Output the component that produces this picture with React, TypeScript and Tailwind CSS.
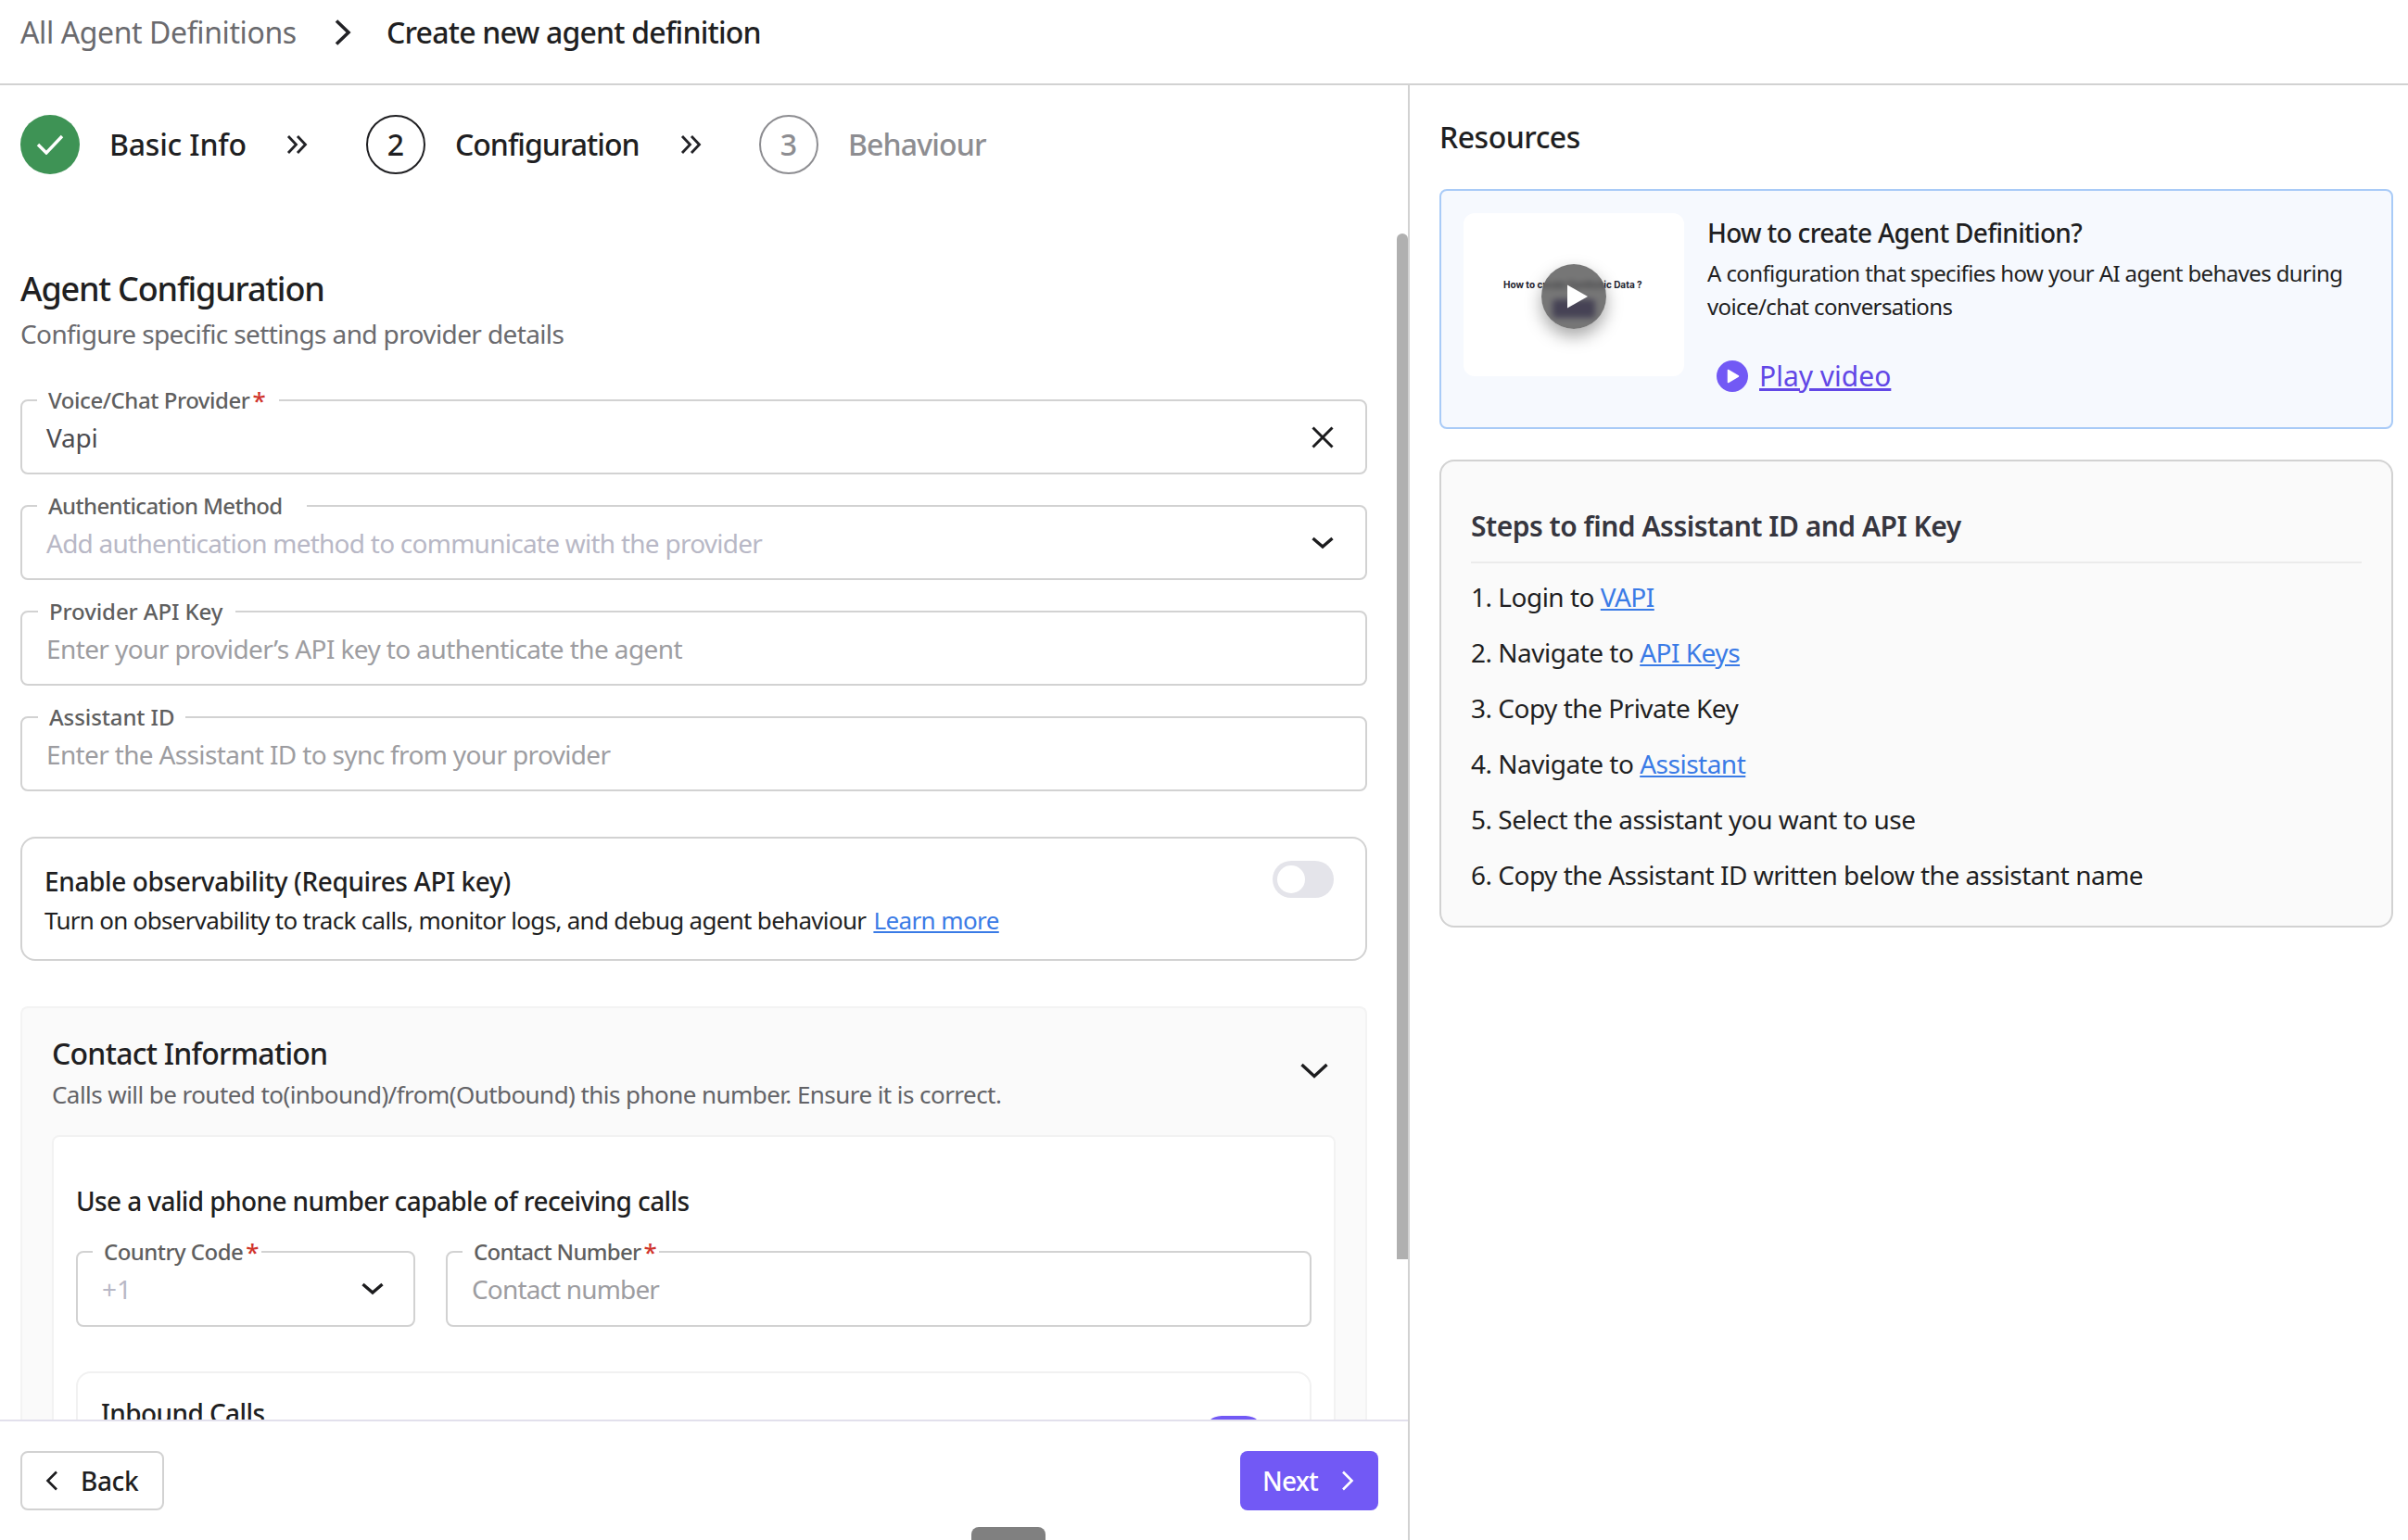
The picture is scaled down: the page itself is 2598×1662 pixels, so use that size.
import type { ReactNode } from 'react'

function DoubleChevron() {
  return (
    <svg width="23" height="20" viewBox="0 0 23 20" fill="none" stroke="#222226" strokeWidth="2.8" className="shrink-0">
      <path d="M2 1l8.5 9L2 19" />
      <path d="M12 1l8.5 9-8.5 9" />
    </svg>
  )
}

function ChevronDown({ className = '' }: { className?: string }) {
  return (
    <svg width="24" height="14" viewBox="0 0 24 14" fill="none" stroke="#1c1c1e" strokeWidth="3.4" className={className}>
      <path d="M1.5 2l10.5 9 10.5-9" />
    </svg>
  )
}

function Field({ label, required, gapClass, children, right, className = '' }: {
  label: string
  required?: boolean
  gapClass: string
  children: ReactNode
  right?: ReactNode
  className?: string
}) {
  return (
    <div className={`relative flex items-center justify-between rounded-lg border-2 border-[#d2d2d2] pl-[26px] pr-[34px] h-[81px] ${className}`}>
      <div className={`absolute left-[16px] -top-[17px] h-8 bg-white pl-3 flex items-center text-[24px] font-medium text-[#5f5f5f] leading-8 ${gapClass}`}>
        {label}
        {required && <span className="text-[#d0342c] ml-[3px] text-[26px]">*</span>}
      </div>
      <div className="text-[28px] leading-9">{children}</div>
      {right}
    </div>
  )
}

export default function App() {
  return (
    <div className="w-[2598px] h-[1662px] overflow-hidden bg-white flex flex-col text-[#1f1f22] font-['Noto_Sans',sans-serif]">
      {/* breadcrumb */}
      <div className="h-[92px] shrink-0 border-b-2 border-[#d2d2d2] pl-[22px] pb-[20px] flex items-center text-[32px] leading-10">
        <span className="w-[339px] text-[#6a6a6e] tracking-[-0.4px]">All Agent Definitions</span>
        <svg width="18" height="28" viewBox="0 0 18 28" fill="none" stroke="#222226" strokeWidth="3.6" className="shrink-0">
          <path d="M2 1.5l13 12.5-13 12.5" />
        </svg>
        <span className="ml-[38px] font-medium tracking-[-0.8px]">Create new agent definition</span>
      </div>

      <div className="flex-1 flex min-h-0">
        {/* left column */}
        <div className="relative w-[1521px] shrink-0 border-r-2 border-[#d2d2d2] flex flex-col">
          <div className="relative flex-1 min-h-0 overflow-hidden pl-[22px] pr-[44px]">
            <div className="absolute right-0 top-[160px] w-3 h-[1107px] bg-[#b0b0b0] rounded-t-md" />

            <div className="flex items-center h-16 mt-8 text-[32px] font-medium">
              <div className="w-16 h-16 rounded-full bg-[#3e9355] flex items-center justify-center shrink-0">
                <svg width="30" height="22" viewBox="0 0 30 22" fill="none" stroke="#fff" strokeWidth="3.4"><path d="M2 11l9 9L28 2" /></svg>
              </div>
              <span className="ml-8 w-[191px] tracking-[-0.2px]">Basic Info</span>
              <DoubleChevron />
              <div className="ml-[63px] w-16 h-16 rounded-full border-2 border-[#1f1f22] flex items-center justify-center shrink-0">2</div>
              <span className="ml-[32px] w-[243px] tracking-[-1px]">Configuration</span>
              <DoubleChevron />
              <div className="ml-[62px] w-16 h-16 rounded-full border-2 border-[#8d8d91] text-[#8d8d91] flex items-center justify-center shrink-0">3</div>
              <span className="ml-8 text-[#8d8d91] tracking-[-0.85px]">Behaviour</span>
            </div>

            <h2 className="mt-[102px] text-[36px] leading-[44px] font-medium tracking-[-1.2px]">Agent Configuration</h2>
            <p className="mt-[8px] text-[28px] leading-9 text-[#6a6a6e] tracking-[-0.62px]">Configure specific settings and provider details</p>

            <div className="mt-[53px] flex flex-col gap-[33px]">
              <Field label="Voice/Chat Provider" required gapClass="pr-[15px] tracking-[-0.45px]" right={
                <svg width="24" height="24" viewBox="0 0 24 24" fill="none" stroke="#1c1c1e" strokeWidth="3"><path d="M1.5 1.5l21 21M22.5 1.5l-21 21" /></svg>
              }>
                <span className="text-[#4c4c50] tracking-[-0.25px]">Vapi</span>
              </Field>
              <Field label="Authentication Method" gapClass="pr-[26px] tracking-[-0.65px]" right={<ChevronDown />}>
                <span className="text-[#b8b8c6] tracking-[-0.75px]">Add authentication method to communicate with the provider</span>
              </Field>
              <Field label="Provider API Key" gapClass="pr-[14px] ml-[1px] tracking-[-0.1px]">
                <span className="text-[#9d9da1] tracking-[-0.6px]">Enter your provider’s API key to authenticate the agent</span>
              </Field>
              <Field label="Assistant ID" gapClass="pr-[12px] ml-[1px] tracking-[-0.1px]">
                <span className="text-[#9d9da1] tracking-[-0.65px]">Enter the Assistant ID to sync from your provider</span>
              </Field>
            </div>

            <div className="mt-[49px] h-[134px] rounded-2xl border-2 border-[#d2d2d2] pl-[24px] pr-[34px] pt-[28px] flex justify-between">
              <div>
                <div className="text-[28px] leading-9 font-medium tracking-[-0.38px]">Enable observability (Requires API key)</div>
                <div className="mt-[6px] text-[26px] leading-9 tracking-[-0.7px]">
                  Turn on observability to track calls, monitor logs, and debug agent behaviour{' '}
                  <a className="ml-[2px] text-[#3a7be6] underline tracking-[-0.6px]">Learn more</a>
                </div>
              </div>
              <div className="w-[66px] h-10 -mt-[4px] rounded-full bg-[#e4e4ea] p-[5px] shrink-0">
                <div className="w-[30px] h-[30px] rounded-full bg-white" />
              </div>
            </div>

            <div className="mt-[49px] rounded-t-lg border-2 border-b-0 border-[#f3f3f3] bg-[#fafafa] px-8 pt-[29px]">
              <div className="flex justify-between">
                <div>
                  <div className="text-[32px] leading-10 font-medium tracking-[-0.76px]">Contact Information</div>
                  <div className="mt-[6px] text-[26px] leading-9 text-[#636367] tracking-[-0.56px]">Calls will be routed to(inbound)/from(Outbound) this phone number. Ensure it is correct.</div>
                </div>
                <svg width="30" height="17" viewBox="0 0 30 17" fill="none" stroke="#1c1c1e" strokeWidth="3.4" className="mt-[30px] mr-2">
                  <path d="M1.5 2L15 14.5 28.5 2" />
                </svg>
              </div>

              <div className="mt-[26px] rounded-t-lg border-2 border-b-0 border-[#f2f2f2] bg-white px-6 pt-[51px] h-[400px]">
                <div className="text-[28px] leading-9 font-medium tracking-[-0.6px]">Use a valid phone number capable of receiving calls</div>
                <div className="mt-9 flex gap-[33px]">
                  <Field label="Country Code" required gapClass="pr-[3px] tracking-[-0.55px]" className="w-[366px] shrink-0 h-[82px]" right={<ChevronDown className="-mr-[2px]" />}>
                    <span className="text-[#b8b8c6]">+1</span>
                  </Field>
                  <Field label="Contact Number" required gapClass="pr-[3px] tracking-[-0.7px]" className="flex-1 h-[82px]">
                    <span className="text-[#9d9da1] tracking-[-0.85px]">Contact number</span>
                  </Field>
                </div>
                <div className="mt-12 rounded-2xl border-2 border-[#f1f1f1] pl-[25px] pr-[49px] pt-[25px] flex justify-between h-[200px]">
                  <div className="text-[28px] leading-9 font-medium tracking-[-0.6px]">Inbound Calls</div>
                  <div className="w-[66px] h-10 mt-[21px] rounded-full bg-[#7259f5]" />
                </div>
              </div>
            </div>
          </div>

          {/* footer */}
          <div className="h-[130px] shrink-0 border-t-2 border-[#e2e0ec] bg-white flex justify-between pl-[22px] pr-[32px] pt-[32px]">
            <button className="w-[155px] h-16 rounded-lg border-2 border-[#d2d2d2] flex items-center pl-[25px] text-[28px] font-medium tracking-[-0.4px]">
              <svg width="14" height="22" viewBox="0 0 14 22" fill="none" stroke="#1c1c1e" strokeWidth="2.6"><path d="M12 1.5L2.5 11l9.5 9.5" /></svg>
              <span className="ml-[24px]">Back</span>
            </button>
            <button className="w-[149px] h-16 rounded-lg bg-[#7259f5] text-white flex items-center pl-[24px] text-[28px] font-medium tracking-[-0.8px]">
              <span>Next</span>
              <svg width="14" height="22" viewBox="0 0 14 22" fill="none" stroke="#fff" strokeWidth="2.6" className="ml-[25px]"><path d="M2 1.5l9.5 9.5L2 20.5" /></svg>
            </button>
          </div>
          <div className="absolute left-[1048px] -bottom-[14px] w-20 h-7 rounded-lg bg-[#808080]" />
        </div>

        {/* right column */}
        <div className="flex-1 min-w-0 pl-[32px] pr-4">
          <div className="mt-[36px] text-[32px] leading-10 font-medium tracking-[-0.5px]">Resources</div>

          <div className="mt-[36px] h-[259px] rounded-lg border-2 border-[#a9cbf7] bg-[#f6f9fe] pl-6 pt-6 flex">
            <div className="relative w-[238px] h-[176px] rounded-xl bg-white shrink-0 overflow-hidden">
              <div className="absolute left-[43px] top-[68px] text-[10px] leading-[18px] font-bold whitespace-nowrap font-['Inter',sans-serif] text-[#22222e]">How to create Synthetic Data ?</div>
              <div className="absolute left-[96px] top-[93px] w-[46px] h-[20px] rounded-sm bg-[#2f2170]" />
              <div className="absolute left-[84px] top-[55px] w-[70px] h-[70px] rounded-full bg-[#4d4d4dc4] backdrop-blur-[3px] shadow-[0_8px_18px_rgba(0,0,0,0.35)] flex items-center justify-center">
                <svg width="24" height="28" viewBox="0 0 24 28" className="ml-2"><path d="M1 1.5v25L23 14z" fill="#fff" strokeLinejoin="round" /></svg>
              </div>
            </div>
            <div className="ml-[25px] pt-[3px] min-w-0">
              <div className="text-[28px] leading-9 font-medium tracking-[-0.7px]">How to create Agent Definition?</div>
              <div className="mt-2 text-[24px] leading-9 tracking-[-0.6px] w-[700px]">A configuration that specifies how your AI agent behaves during voice/chat conversations</div>
              <div className="mt-[39px] ml-[10px] flex items-center h-9">
                <svg width="34" height="34" viewBox="0 0 34 34" className="shrink-0"><circle cx="17" cy="17" r="17" fill="#7259f5" /><path d="M12.5 10.5v13L23.5 17z" fill="#fff" stroke="#fff" strokeWidth="1.5" strokeLinejoin="round" /></svg>
                <a className="ml-3 text-[30px] leading-9 text-[#6247e6] underline">Play video</a>
              </div>
            </div>
          </div>

          <div className="mt-[33px] rounded-2xl border-2 border-[#d2d2d2] bg-[#fafafa] px-8 pt-[50px] pb-[37px]">
            <div className="pb-[18px] border-b-2 border-[#ebebeb] text-[30px] leading-10 font-semibold text-[#36363f] tracking-[-0.5px]">Steps to find Assistant ID and API Key</div>
            <ol className="mt-[18px] flex flex-col gap-6 text-[28px] leading-9 tracking-[-0.5px]">
              <li>1. Login to <a className="text-[#3a7be6] underline">VAPI</a></li>
              <li>2. Navigate to <a className="text-[#3a7be6] underline">API Keys</a></li>
              <li>3. Copy the Private Key</li>
              <li>4. Navigate to <a className="text-[#3a7be6] underline">Assistant</a></li>
              <li>5. Select the assistant you want to use</li>
              <li>6. Copy the Assistant ID written below the assistant name</li>
            </ol>
          </div>
        </div>
      </div>
    </div>
  )
}
